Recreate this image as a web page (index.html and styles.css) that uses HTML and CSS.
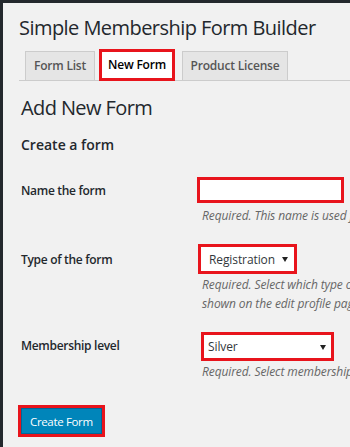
FILE: index.html
```html
<!DOCTYPE html>
<html lang="en">
<head>
  <meta charset="UTF-8" />
  <meta name="viewport" content="width=device-width, initial-scale=1.0" />
  <title>Simple Membership Form Builder</title>
  <link rel="stylesheet" href="styles.css">
</head>
<body>
  <div class="wrap">
    <h1 class="page-title">Simple Membership Form Builder</h1>

    <nav class="tabs">
      <a class="tab tab-list" href="#">Form List</a>
      <a class="tab tab-active" href="#">New Form</a>
      <a class="tab tab-license" href="#">Product License</a>
    </nav>

    <div class="content">
      <h2 class="section-title">Add New Form</h2>
      <h3 class="sub-title">Create a form</h3>

      <div class="rows">
        <div class="row">
          <label class="label" for="form-name">Name the form</label>
          <div class="field">
            <input class="text-input" id="form-name" type="text">
            <p class="desc">Required. This name is used for admin purposes.</p>
          </div>
        </div>

        <div class="row">
          <label class="label label-type" for="form-type">Type of the form</label>
          <div class="field">
            <span class="select-wrap select-type">
              <select id="form-type">
                <option>Registration</option>
                <option>Edit Profile</option>
              </select>
            </span>
            <p class="desc desc-tight">Required. Select which type of form you want to create.<br>shown on the edit profile page of the member.</p>
          </div>
        </div>

        <div class="row">
          <label class="label" for="form-level">Membership level</label>
          <div class="field">
            <span class="select-wrap select-level">
              <select id="form-level">
                <option>Silver</option>
                <option>Gold</option>
              </select>
            </span>
            <p class="desc desc-tight">Required. Select membership level for this form.</p>
          </div>
        </div>
      </div>

      <button class="submit" type="button">Create Form</button>
    </div>
  </div>
</body>
</html>
```

FILE: styles.css
```css
* {
  box-sizing: border-box;
}

body {
  margin: 0;
  min-height: 100vh;
  background: #f1f1f1;
  border-top: 3px solid #23282d;
  border-left: 3px solid #23282d;
  font-family: 'Open Sans', sans-serif;
  color: #23282d;
  overflow: hidden;
}

.wrap {
  padding: 10px 0 0 16px;
}

.page-title {
  margin: 0;
  font-size: 20px;
  font-weight: 400;
  letter-spacing: -0.55px;
  line-height: 29px;
  white-space: nowrap;
  color: #23282d;
}

/* tabs */
.tabs {
  display: flex;
  align-items: flex-end;
  margin-top: 7px;
  height: 32px;
  border-bottom: 1px solid #ccc;
}

.tab {
  margin-left: 6px;
  height: 29px;
  border: 1px solid #ccc;
  border-bottom: 0;
  background: #e5e5e5;
  color: #555;
  font-size: 12px;
  font-weight: 600;
  letter-spacing: -0.2px;
  line-height: 28px;
  text-align: center;
  text-decoration: none;
}

.tab-list {
  width: 70px;
}

.tab-active {
  width: 76px;
  margin-left: 4px;
  margin-bottom: -1px;
  height: 32px;
  border: 3px solid #e8141c;
  background: #fff;
  color: #000;
  line-height: 26px;
}

.tab-license {
  width: 106px;
  margin-left: 7px;
}

/* form */
.content {
  padding-left: 2px;
}

.section-title {
  margin: 12px 0 0;
  font-size: 20px;
  font-weight: 400;
  letter-spacing: -0.6px;
  line-height: 29px;
}

.sub-title {
  margin: 13px 0 0;
  font-size: 14px;
  font-weight: 600;
  line-height: 19px;
}

.rows {
  display: flex;
  flex-direction: column;
  gap: 19px;
  margin-top: 23px;
}

.row {
  display: flex;
  align-items: flex-start;
}

.label {
  flex: none;
  width: 176px;
  padding-top: 4px;
  font-size: 12px;
  font-weight: 600;
  letter-spacing: -0.3px;
  line-height: 19px;
}

.label-type {
  padding-top: 6px;
}

.field {
  display: flex;
  flex-direction: column;
  align-items: flex-start;
  min-width: 0;
}

.text-input {
  display: block;
  width: 147px;
  height: 26px;
  margin: 0;
  padding: 0 4px;
  border: 3px solid #e8141c;
  background: #fff;
}

.desc {
  margin: 3px 0 0 5px;
  font-size: 12px;
  font-style: italic;
  letter-spacing: -0.1px;
  line-height: 19px;
  color: #666;
  white-space: nowrap;
}

.desc-tight {
  margin-top: 1px;
}

.select-wrap {
  position: relative;
}

.select-wrap select {
  display: block;
  -webkit-appearance: none;
  appearance: none;
  margin: 0;
  border: 3px solid #e8141c;
  border-radius: 0;
  background: #fff;
  color: #32373c;
  font-family: 'Open Sans', sans-serif;
  font-size: 12px;
  letter-spacing: -0.1px;
}

.select-wrap::after {
  content: "";
  position: absolute;
  top: 50%;
  right: 9px;
  margin-top: -2px;
  border-left: 3px solid transparent;
  border-right: 3px solid transparent;
  border-top: 5px solid #222;
  pointer-events: none;
}

.select-type {
  margin-left: 1px;
}

.select-type select {
  width: 99px;
  height: 30px;
  padding: 0 0 0 8px;
}

.select-level {
  margin-left: 4px;
}

.select-level select {
  width: 133px;
  height: 29px;
  padding: 0 0 0 4px;
}

.select-level::after {
  right: 8px;
}

.submit {
  display: block;
  margin-top: 27px;
  height: 26px;
  padding: 0 8px;
  border: 1px solid #006799;
  background: #0085ba;
  color: #fff;
  font-family: 'Open Sans', sans-serif;
  font-size: 11.5px;
  letter-spacing: -0.35px;
  outline: 3px solid #e8141c;
  cursor: pointer;
}
```
